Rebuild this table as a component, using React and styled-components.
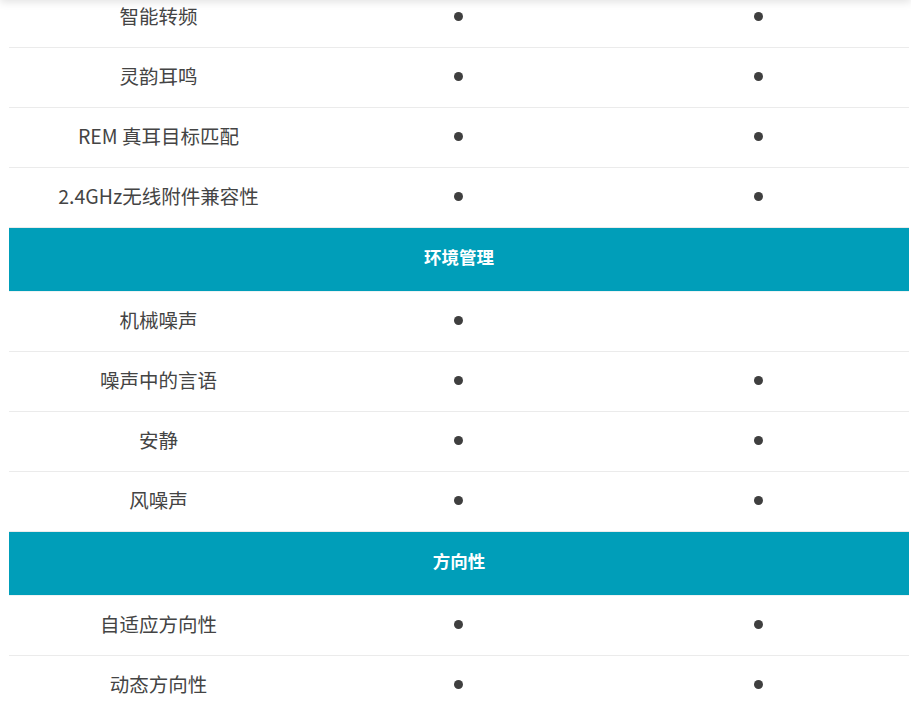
import React from "react";
import styled, { createGlobalStyle } from "styled-components";

const Global = createGlobalStyle`
  html, body { margin: 0; padding: 0; background: #fff; overflow: hidden; }
  body { font-family: "Noto Sans CJK SC", "Noto Sans", sans-serif; }
`;

const TopShade = styled.div`
  position: fixed;
  top: -12px;
  left: 0;
  right: 0;
  height: 12px;
  box-shadow: 0 2px 8px rgba(0, 0, 0, 0.12);
  z-index: 2;
`;

const Table = styled.div`
  margin: -12px 0 0 9px;
  width: 900px;
  display: flex;
  flex-direction: column;
`;

const Row = styled.div`
  display: grid;
  grid-template-columns: 299px 300px 301px;
  height: 60px;
  box-sizing: border-box;
  border-bottom: 1px solid #ebebeb;
  align-items: center;
`;

const Label = styled.div`
  text-align: center;
  font-size: 19.5px;
  color: #444;
  line-height: 1;
  padding-bottom: 3px;
`;

const Cell = styled.div`
  display: flex;
  justify-content: center;
  align-items: center;
  padding-bottom: 2px;
`;

const Dot = styled.span`
  width: 9px;
  height: 9px;
  border-radius: 50%;
  background: #3f3f3f;
`;

const SectionHead = styled.div`
  height: 64px;
  box-sizing: border-box;
  background: #009eb9;
  border-bottom: 1px solid #eef3f4;
  display: flex;
  align-items: center;
  justify-content: center;
  color: #fff;
  font-weight: 700;
  font-size: 17.5px;
  padding-bottom: 6px;
`;

const data = [
  { type: "row", label: "智能转频", a: true, b: true },
  { type: "row", label: "灵韵耳鸣", a: true, b: true },
  { type: "row", label: "REM 真耳目标匹配", a: true, b: true },
  { type: "row", label: "2.4GHz无线附件兼容性", a: true, b: true },
  { type: "head", label: "环境管理" },
  { type: "row", label: "机械噪声", a: true, b: false },
  { type: "row", label: "噪声中的言语", a: true, b: true },
  { type: "row", label: "安静", a: true, b: true },
  { type: "row", label: "风噪声", a: true, b: true },
  { type: "head", label: "方向性" },
  { type: "row", label: "自适应方向性", a: true, b: true },
  { type: "row", label: "动态方向性", a: true, b: true },
];

export default function App() {
  return (
    <>
      <Global />
      <TopShade />
      <Table>
        {data.map((d, i) =>
          d.type === "head" ? (
            <SectionHead key={i}>{d.label}</SectionHead>
          ) : (
            <Row key={i}>
              <Label>{d.label}</Label>
              <Cell>{d.a && <Dot />}</Cell>
              <Cell>{d.b && <Dot />}</Cell>
            </Row>
          )
        )}
      </Table>
    </>
  );
}
